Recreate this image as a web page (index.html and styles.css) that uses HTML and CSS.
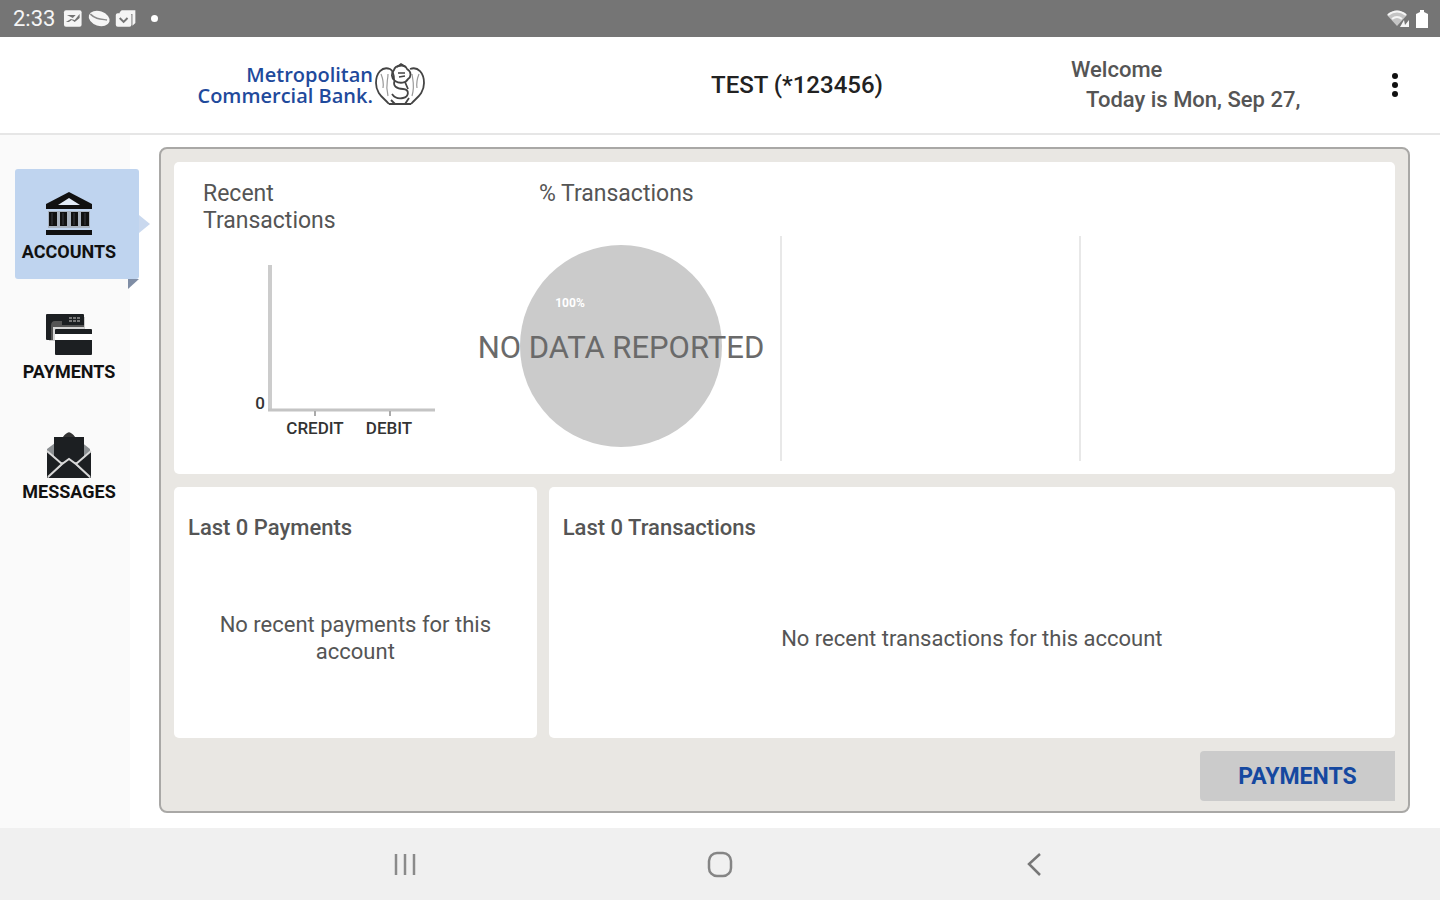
FILE: index.html
```html
<!DOCTYPE html>
<html lang="en">
<head>
  <meta charset="utf-8">
  <title>Metropolitan Commercial Bank</title>
  <link rel="stylesheet" href="styles.css">
</head>
<body>
  <div class="status-bar">
    <span class="clock">2:33</span>
    <svg class="status-icons" width="90" height="22" viewBox="0 0 90 22" fill="#f5f5f5">
      <rect x="1" y="2" width="18" height="17" rx="2"/>
      <path d="M4 7h9l-3 3zM3 14l5-3 4 1 5-6v4l-5 4-3-2-3 2z" fill="#757575"/>
      <ellipse cx="37" cy="10.500" rx="11" ry="7.500" transform="rotate(18 37 10.500)"/>
      <path d="M28 6c5 5 10 5 17 6" fill="none" stroke="#8a8a8a" stroke-width="1.500"/>
      <path d="M58 4l2-2h14v13l-3 3V6H58z"/>
      <rect x="54" y="5" width="16" height="14" rx="2"/>
      <path d="M58 10l4 4 4-4" fill="none" stroke="#757575" stroke-width="2"/>
    </svg>
    <span class="dot"></span>
    <svg class="device-icons" width="44" height="22" viewBox="0 0 44 22">
      <path d="M1 7q10-9 20 0L11 18z" fill="#c4c4c4"/>
      <path d="M2 7q9-7 18 0M6 11q5-4 10 0" fill="none" stroke="#f5f5f5" stroke-width="2"/>
      <path d="M14 19l4-7 1 5 4-5v7z" fill="#f5f5f5"/>
      <path d="M30 6l4-2V2h4v2l4 2v14H30z" fill="#fff"/>
    </svg>
  </div>

  <header class="header">
    <div class="logo">
      <div class="logo-text">Metropolitan<br>Commercial Bank.</div>
      <svg class="crest" width="50" height="46" viewBox="0 0 50 46" fill="none" stroke="#444" stroke-width="1.800">
        <path d="M14 42C9 36 1 32 1 21 1 11 7 4 15 7c4 2 4 7 4 11"/>
        <path d="M36 42c5-6 13-10 13-21C49 11 43 4 35 7"/>
        <path d="M6 12c2 5 3 8 2 14M13 12c0 8-3 10 0 22M37 12c1 8 3 12 0 22M44 12c-2 5-3 8-2 14" stroke-width="1.200" stroke="#999"/>
        <path d="M19 8c1-5 11-6 13-1 5 3 4 8 1 10-2 4-8 5-13 2-4-3-4-8-1-11z"/>
        <path d="M22 5l4-3 5 3M20 18c-3 6 2 9 8 9 7 0 6 8 0 9-5 1-9-1-11-4M30 20l3 7M14 42h22M16 38l4 4M34 36l-4 6"/>
        <path d="M23 11h7M24 15l6-1" stroke-width="1.500"/>
      </svg>
    </div>
    <h1 class="account-title">TEST (*123456)</h1>
    <div class="welcome">
      <div>Welcome</div>
      <div class="today">Today is Mon, Sep 27,</div>
    </div>
    <button class="menu-button" type="button" aria-label="More options">
      <svg width="8" height="28" viewBox="0 0 8 28" fill="#111">
        <circle cx="4" cy="5" r="3"/>
        <circle cx="4" cy="14" r="3"/>
        <circle cx="4" cy="23" r="3"/>
      </svg>
    </button>
  </header>

  <div class="content">
    <nav class="sidebar">
      <a class="side-item active" href="#">
        <svg width="46" height="46" viewBox="0 0 46 46" fill="#111">
          <path d="M23 0L46 12v5H0v-5z"/>
          <path d="M23 6l11 7H12z" fill="#e3ecf8"/>
          <path d="M2 19h42v17H2z" fill="#a9b3c0"/>
          <path d="M3 20h8v14H3zM14 20h7v14h-7zM25 20h7v14h-7zM35 20h8v14h-8z"/>
          <path d="M6 21v12M17 21v12M28 21v12M39 21v12" stroke="#3c3f45"/>
          <rect y="38" width="46" height="5"/>
        </svg>
        <span>ACCOUNTS</span>
      </a>
      <a class="side-item" href="#">
        <svg width="46" height="46" viewBox="0 0 46 46">
          <rect x="3" y="5" width="36" height="24" fill="#ccc"/>
          <rect x="0" y="2" width="38" height="26" rx="1" fill="#1c1f22"/>
          <path d="M23 6h12M23 9h12" stroke="#777" stroke-width="2" stroke-dasharray="3 1"/>
          <path d="M5 28V14q0-5 4-5h7v4h22v15z" fill="#555"/>
          <path d="M7 28V15h31v13z" fill="#d5d5d5"/>
          <rect x="9" y="17" width="37" height="26" rx="1" fill="#1c1f22"/>
          <rect x="9" y="22" width="37" height="6" fill="#fff"/>
        </svg>
        <span>PAYMENTS</span>
      </a>
      <a class="side-item" href="#">
        <svg width="46" height="46" viewBox="0 0 46 46">
          <path d="M23 0l6 5 15 12v28H1V17L17 5z" fill="#8b8f92"/>
          <path d="M17 5q6-9 12 0z" fill="#333"/>
          <rect x="8" y="5" width="30" height="25" fill="#1c1f22"/>
          <path d="M1 19l15 13L1 46zM45 19L30 32l15 14z" fill="#1c1f22"/>
          <path d="M2 46l21-19 21 19z" fill="#1c1f22"/>
          <path d="M1 19l15 13 7-5 7 5 15-13M16 32L2 45M30 32l14 13" fill="none" stroke="#d8d8d8" stroke-width="2"/>
        </svg>
        <span>MESSAGES</span>
      </a>
    </nav>

    <main class="panel">
      <section class="card charts">
        <div class="chart-col recent">
          <h2 class="chart-title">Recent Transactions</h2>
          <svg class="bar-chart" width="240" height="190" viewBox="0 0 240 190">
            <path d="M67 11v146" stroke="#ccc" stroke-width="4"/>
            <path d="M65 156h167" stroke="#c4c4c4" stroke-width="3"/>
            <path d="M112 157v5M187 157v5" stroke="#aaa" stroke-width="2"/>
            <text x="57" y="155" text-anchor="middle">0</text>
            <text x="112" y="180" text-anchor="middle">CREDIT</text>
            <text x="186" y="180" text-anchor="middle">DEBIT</text>
          </svg>
        </div>
        <div class="chart-col percent">
          <h2 class="chart-title">% Transactions</h2>
          <svg class="pie-chart" width="282" height="204" viewBox="0 0 282 204">
            <circle cx="141" cy="102" r="101" fill="#cbcbcb"/>
            <text class="pie-value" x="90" y="63" text-anchor="middle">100%</text>
            <text class="pie-empty" x="141" y="114" text-anchor="middle">NO DATA REPORTED</text>
          </svg>
        </div>
        <div class="chart-col divided"></div>
        <div class="chart-col divided"></div>
      </section>

      <div class="lists">
        <section class="card list">
          <h2 class="list-title">Last 0 Payments</h2>
          <p class="empty">No recent payments for this account</p>
        </section>
        <section class="card list">
          <h2 class="list-title">Last 0 Transactions</h2>
          <p class="empty">No recent transactions for this account</p>
        </section>
      </div>

      <button class="payments-button" type="button">PAYMENTS</button>
    </main>
  </div>

  <footer class="nav-bar">
    <button type="button" aria-label="Recent apps">
      <svg width="28" height="28" viewBox="0 0 28 28" stroke="#8a8a8a" stroke-width="2.500">
        <path d="M5 4v21M14 4v21M23 4v21"/>
      </svg>
    </button>
    <button type="button" aria-label="Home">
      <svg width="28" height="28" viewBox="0 0 28 28" fill="none" stroke="#858585" stroke-width="2.500">
        <rect x="3" y="3" width="22" height="23" rx="8"/>
      </svg>
    </button>
    <button type="button" aria-label="Back">
      <svg width="28" height="28" viewBox="0 0 28 28" fill="none" stroke="#777" stroke-width="2.500">
        <path d="M19 4L8 14l11 11"/>
      </svg>
    </button>
  </footer>
</body>
</html>
```

FILE: styles.css
```css
* {
  box-sizing: border-box;
}

body {
  display: flex;
  flex-direction: column;
  min-height: 100vh;
  margin: 0;
  font-family: Roboto, Arial, sans-serif;
  color: #555;
  background-color: #fff;
}

h1,
h2,
p {
  margin: 0;
}

button {
  padding: 0;
  border: none;
  background: none;
  font-family: inherit;
  cursor: pointer;
}

svg {
  display: block;
}

/* Status bar */
.status-bar {
  display: flex;
  align-items: center;
  height: 37px;
  padding: 0 10px 0 13px;
  background-color: #757575;
  color: #f5f5f5;
}

.clock {
  width: 50px;
  font-size: 22px;
}

.status-icons {
  width: 88px;
}

.dot {
  width: 7px;
  height: 7px;
  border-radius: 50%;
  background-color: #fff;
}

.device-icons {
  margin-left: auto;
}

/* Header */
.header {
  display: grid;
  grid-template-columns: 523fr 548fr 279fr 90fr;
  align-items: center;
  height: 98px;
  border-bottom: 2px solid #e6e6e6;
}

.logo {
  display: flex;
  align-items: center;
  justify-content: flex-end;
  gap: 2px;
  padding-right: 98px;
}

.logo-text {
  font-family: "Open Sans", sans-serif;
  font-size: 20px;
  font-weight: 600;
  line-height: 21px;
  text-align: right;
  white-space: nowrap;
  color: #1f4a9c;
}

.crest {
  flex: none;
}

.account-title {
  font-size: 24px;
  font-weight: 500;
  text-align: center;
  color: #222;
}

.welcome {
  font-size: 22px;
  font-weight: 500;
  line-height: 30px;
  white-space: nowrap;
}

.today {
  padding-left: 15px;
}

.menu-button {
  justify-self: center;
}

/* Sidebar */
.content {
  display: flex;
  flex: 1;
}

.sidebar {
  display: flex;
  flex-direction: column;
  gap: 10px;
  width: 130px;
  padding: 34px 0 0 15px;
  background-color: #fafafa;
}

.side-item {
  position: relative;
  display: flex;
  flex-direction: column;
  align-items: center;
  gap: 4px;
  width: 124px;
  height: 110px;
  padding: 23px 16px 0 0;
  font-size: 18px;
  font-weight: 700;
  line-height: 20px;
  text-decoration: none;
  color: #111;
}

.active {
  border-radius: 3px;
  background-color: #bfd4ef;
}

.active::before {
  content: "";
  position: absolute;
  top: 46px;
  left: 100%;
  border: 9px solid transparent;
  border-left: 11px solid #c9d8ee;
  border-right: none;
}

.active::after {
  content: "";
  position: absolute;
  top: 100%;
  right: 0;
  border-top: 10px solid #7f8da5;
  border-right: 11px solid transparent;
}

/* Dashboard panel */
.panel {
  display: grid;
  flex: 1;
  grid-template-rows: 312fr 251fr 50px;
  row-gap: 13px;
  margin: 12px 30px 15px 29px;
  padding: 13px 13px 10px;
  border: 2px solid #a9a8a6;
  border-radius: 8px;
  background-color: #e9e7e3;
}

.card {
  border-radius: 5px;
  background-color: #fff;
}

.charts {
  display: grid;
  grid-template-columns: repeat(4, 1fr);
  padding: 18px 18px 13px 8px;
}

.chart-title {
  font-size: 23px;
  font-weight: 400;
  line-height: 27px;
}

.recent {
  padding-left: 21px;
}

.recent .chart-title {
  width: 150px;
}

.bar-chart {
  margin-top: 20px;
  font-size: 17px;
  font-weight: 500;
  fill: #333;
}

.percent {
  padding-right: 18px;
  text-align: center;
}

.percent .chart-title {
  padding-right: 10px;
}

.pie-chart {
  margin: 37px auto 0;
  overflow: visible;
}

.pie-value {
  font-size: 12px;
  font-weight: 700;
  fill: #fff;
}

.pie-empty {
  font-size: 31px;
  fill: #6a6a6a;
}

.divided {
  margin-top: 56px;
  border-left: 2px solid #e8e8e8;
}

.lists {
  display: grid;
  grid-template-columns: 363fr 847fr;
  gap: 12px;
}

.list {
  display: flex;
  flex-direction: column;
  padding: 27px 14px 3px;
}

.list-title {
  font-size: 22px;
  font-weight: 500;
  line-height: 27px;
}

.empty {
  margin: auto;
  padding: 0 16px;
  font-size: 22px;
  line-height: 27px;
  text-align: center;
}

.payments-button {
  justify-self: end;
  width: 195px;
  border-radius: 4px 0 0 4px;
  background-color: #cbcbcb;
  font-size: 23px;
  font-weight: 700;
  color: #1548a0;
}

/* Bottom navigation */
.nav-bar {
  display: flex;
  justify-content: center;
  gap: 287px;
  height: 72px;
  background-color: #f0f0f0;
}
```
